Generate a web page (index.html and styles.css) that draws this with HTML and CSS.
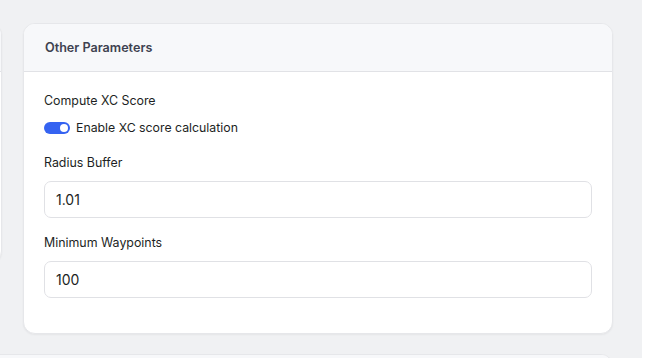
FILE: index.html
```html
<!DOCTYPE html>
<html lang="en">
<head>
    <meta charset="UTF-8">
    <meta name="viewport" content="width=device-width, initial-scale=1.0">
    <title>Settings - Other Parameters</title>
    <link rel="stylesheet" href="styles.css">
</head>
<body>
    <div class="page">
        <div class="content">
            <div class="grid">
                <div class="card card-side">
                    <div class="card-header"></div>
                    <div class="card-body"></div>
                </div>

                <div class="card">
                    <div class="card-header">Other Parameters</div>
                    <div class="card-body">
                        <div class="field">
                            <div class="field-label">Compute XC Score</div>
                            <label class="toggle-row">
                                <span class="toggle"><span class="toggle-knob"></span></span>
                                <span>Enable XC score calculation</span>
                            </label>
                        </div>
                        <div class="field">
                            <div class="field-label">Radius Buffer</div>
                            <input class="input" type="text" value="1.01">
                        </div>
                        <div class="field">
                            <div class="field-label">Minimum Waypoints</div>
                            <input class="input" type="text" value="100">
                        </div>
                    </div>
                </div>

                <div class="card card-wide">
                    <div class="card-header"></div>
                </div>
            </div>
        </div>
        <div class="side"></div>
    </div>
</body>
</html>
```

FILE: styles.css
```css
body {
    margin: 0;
    padding: 0;
    font-family: Inter, 'Noto Sans', sans-serif;
    background: #f0f1f3;
    color: #1d1f24;
    overflow: hidden;
}

.page {
    display: flex;
    height: 100vh;
}

.content {
    flex: 1;
    padding: 23px 29px 0 0;
}

.side {
    width: 13px;
    background: #ffffff;
}

.grid {
    display: grid;
    grid-template-columns: 402px 590px;
    column-gap: 21px;
    row-gap: 20px;
    align-items: start;
    margin-left: -400px;
}

.card {
    background: #ffffff;
    border: 1px solid #e6e7ea;
    border-radius: 12px;
    box-shadow: 0 1px 2px rgba(0, 0, 0, 0.05);
    overflow: hidden;
}

.card-side {
    height: 238px;
}

.card-wide {
    grid-column: 1 / -1;
    height: 80px;
}

.card-header {
    height: 47px;
    display: flex;
    align-items: center;
    padding: 0 21px;
    background: #f7f8fa;
    border-bottom: 1px solid #e1e2e6;
    font-size: 12.6px;
    font-weight: 600;
    color: #3e4250;
}

.card-body {
    padding: 20px 20px 35px;
}

.field {
    margin-bottom: 16px;
}

.field:first-child {
    margin-bottom: 17px;
}

.field:last-child {
    margin-bottom: 0;
}

.field-label {
    font-size: 12.4px;
    line-height: 18px;
    margin-bottom: 9px;
}

.toggle-row {
    display: flex;
    align-items: center;
    gap: 6px;
    font-size: 12.3px;
    line-height: 18px;
}

.toggle {
    width: 26px;
    height: 12px;
    border-radius: 6px;
    background: #3563f1;
    display: flex;
    align-items: center;
    justify-content: flex-end;
    padding: 0 2px;
    box-sizing: border-box;
}

.toggle-knob {
    width: 8px;
    height: 8px;
    border-radius: 50%;
    background: #ffffff;
}

.input {
    display: block;
    width: 100%;
    box-sizing: border-box;
    height: 37px;
    padding: 0 11px;
    border: 1px solid #e0e1e5;
    border-radius: 7px;
    font-family: Inter, 'Noto Sans', sans-serif;
    font-size: 14px;
    color: #1d1f24;
    background: #ffffff;
    outline: none;
}
```
